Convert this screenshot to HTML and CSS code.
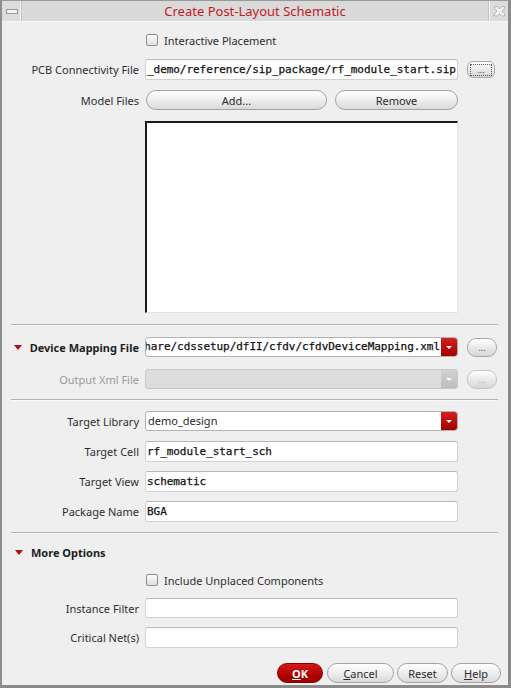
FILE: index.html
```html
<!DOCTYPE html>
<html>
<head>
<meta charset="utf-8">
<link rel="stylesheet" href="styles.css">
</head>
<body>
<div class="win">
  <div class="titlebar">
    <div class="tb-btn tb-min"><svg width="12" height="5" viewBox="0 0 12 5"><rect x="0.5" y="0.5" width="11" height="4" fill="#f4f4f4" stroke="#9a9a9a"/></svg></div>
    <div class="tb-title">Create Post-Layout Schematic</div>
    <div class="tb-btn tb-close"><svg width="13" height="13" viewBox="0 0 13 13"><path d="M1.5 1.5h3l2 2.5 2-2.5h3v2l-2.5 2.5 2.5 2.5v2.5h-3l-2-2.5-2 2.5h-3v-2.5l2.5-2.5-2.5-2.5z" fill="#f2f2f2" stroke="#b4b4b4"/></svg></div>
  </div>
  <div class="content">
    <div class="row r-cb1">
      <span class="lab"></span>
      <label class="check"><span class="box"></span>Interactive Placement</label>
    </div>
    <div class="row r-pcb">
      <span class="lab">PCB Connectivity File</span>
      <div class="field input mono">_demo/reference/sip_package/rf_module_start.sip</div>
      <div class="dots focus"><span>...</span></div>
    </div>
    <div class="row r-model">
      <span class="lab">Model Files</span>
      <div class="twobtn">
        <div class="btn add">Add...</div>
        <div class="btn remove">Remove</div>
      </div>
    </div>
    <div class="row r-list">
      <span class="lab"></span>
      <div class="listbox"></div>
    </div>
    <div class="sep s1"></div>
    <div class="row r-dmf">
      <span class="lab bold"><span class="tri"></span>Device Mapping File</span>
      <div class="field combo">
        <div class="ctext mono clipstart"><span>share/cdssetup/dfII/cfdv/cfdvDeviceMapping.xml</span></div>
        <div class="drop"><span class="arrow"></span></div>
      </div>
      <div class="dots"><span>...</span></div>
    </div>
    <div class="row r-out">
      <span class="lab dis">Output Xml File</span>
      <div class="field combo disabled">
        <div class="ctext"></div>
        <div class="drop"><span class="arrow"></span></div>
      </div>
      <div class="dots disabled"><span>...</span></div>
    </div>
    <div class="sep s2"></div>
    <div class="row r-tl">
      <span class="lab">Target Library</span>
      <div class="field combo">
        <div class="ctext sans">demo_design</div>
        <div class="drop"><span class="arrow"></span></div>
      </div>
    </div>
    <div class="row r-tc">
      <span class="lab">Target Cell</span>
      <div class="field input mono">rf_module_start_sch</div>
    </div>
    <div class="row r-tv">
      <span class="lab">Target View</span>
      <div class="field input mono">schematic</div>
    </div>
    <div class="row r-pn">
      <span class="lab">Package Name</span>
      <div class="field input mono">BGA</div>
    </div>
    <div class="sep s3"></div>
    <div class="row r-more">
      <span class="lab bold left"><span class="tri"></span>More Options</span>
    </div>
    <div class="row r-cb2">
      <span class="lab"></span>
      <label class="check"><span class="box"></span>Include Unplaced Components</label>
    </div>
    <div class="row r-if">
      <span class="lab">Instance Filter</span>
      <div class="field input mono"></div>
    </div>
    <div class="row r-cn">
      <span class="lab">Critical Net(s)</span>
      <div class="field input mono"></div>
    </div>
    <div class="actions">
      <div class="btn ok"><u>O</u>K</div>
      <div class="btn cancel"><u>C</u>ancel</div>
      <div class="btn reset">Reset</div>
      <div class="btn help"><u>H</u>elp</div>
    </div>
  </div>
</div>
</body>
</html>
```
FILE: styles.css
```css
html, body {
  margin: 0;
  padding: 0;
  background: #efefef;
}
body {
  font-family: "Noto Sans", "DejaVu Sans", sans-serif;
  font-size: 11px;
  color: #2a2a2a;
}
.win {
  width: 511px;
  height: 688px;
  box-sizing: border-box;
  border-left: 2px solid #8e8e8e;
  border-right: 3px solid #8a8a8a;
  border-bottom: 3px solid #8a8a8a;
  border-top: 1px solid #9a9a9a;
  background: #efefef;
  display: flex;
  flex-direction: column;
  overflow: hidden;
}
.titlebar {
  height: 21px;
  display: flex;
  align-items: stretch;
  background: #d9d9d9;
  border-bottom: 1px solid #f6f6f6;
  box-sizing: border-box;
}
.tb-btn {
  display: flex;
  align-items: center;
  justify-content: center;
  background: #dcdcdc;
}
.tb-min {
  width: 17px;
  margin-left: 1px;
  border-right: 1px solid #f4f4f4;
}
.tb-close {
  width: 18px;
  border-left: 1px solid #f4f4f4;
  margin-right: 0;
}
.tb-title {
  flex: 1;
  text-align: center;
  color: #c41a1e;
  font-size: 13px;
  line-height: 20px;
  background: #dadada;
  border-left: 1px solid #c4c4c4;
  border-right: 1px solid #c4c4c4;
}
.content {
  flex: 1;
  display: flex;
  flex-direction: column;
}
.row {
  display: flex;
  align-items: center;
}
.lab {
  width: 137px;
  flex: none;
  text-align: right;
  white-space: nowrap;
  color: #2e2e2e;
}
.lab.bold {
  font-weight: bold;
  color: #1e1e1e;
  display: flex;
  align-items: center;
  justify-content: flex-end;
}
.lab.bold.left {
  justify-content: flex-start;
  padding-left: 13px;
  box-sizing: border-box;
}
.lab.dis {
  color: #9a9a9a;
}
.tri {
  width: 0;
  height: 0;
  border-left: 4px solid transparent;
  border-right: 4px solid transparent;
  border-top: 5px solid #b30f12;
  margin-right: 8px;
}
.field {
  margin-left: 6px;
  width: 313px;
  flex: none;
  box-sizing: border-box;
}
.input {
  height: 21px;
  background: #ffffff;
  border: 1px solid #d2d2d2;
  border-top-color: #b8b8b8;
  border-radius: 3px;
  padding: 0 1px;
  line-height: 19px;
  white-space: nowrap;
  overflow: hidden;
}
.mono {
  font-family: "DejaVu Sans Mono", "Liberation Mono", monospace;
  font-size: 11px;
  letter-spacing: -0.05px;
  color: #111111;
  -webkit-text-stroke: 0.25px #111111;
}
.sans {
  font-family: "Noto Sans", "DejaVu Sans", sans-serif;
}
.check {
  margin-left: 7px;
  display: flex;
  align-items: center;
  color: #2e2e2e;
}
.box {
  width: 10px;
  height: 10px;
  border: 1px solid #8d8d8d;
  border-radius: 2px;
  background: linear-gradient(#fdfdfd, #dedede);
  margin-right: 6px;
}
.dots {
  margin-left: 9px;
  width: 30px;
  height: 19px;
  box-sizing: border-box;
  border: 1px solid #a9a9a9;
  border-radius: 9px;
  background: linear-gradient(#ffffff, #e6e6e6 60%, #d6d6d6);
  display: flex;
  align-items: flex-end;
  justify-content: center;
  font-size: 9px;
  line-height: 13px;
  color: #444;
  padding-bottom: 2px;
}
.dots.focus {
  width: 28px;
  height: 17px;
  border-radius: 6px;
}
.dots.focus span {
  outline: 1px dotted #555;
  padding: 0 6px;
  line-height: 10px;
}
.dots.disabled {
  color: #aaa;
  border-color: #c6c6c6;
}
.btn {
  box-sizing: border-box;
  height: 20px;
  border: 1px solid #a3a3a3;
  border-radius: 10px;
  background: linear-gradient(#ffffff, #eeeeee 50%, #dadada);
  display: flex;
  align-items: center;
  justify-content: center;
  color: #2a2a2a;
  font-size: 11px;
}
.twobtn {
  margin-left: 7px;
  display: flex;
  width: 312px;
}
.add {
  width: 181px;
}
.remove {
  width: 123px;
  margin-left: 8px;
}
.listbox {
  margin-left: 6px;
  width: 313px;
  height: 192px;
  box-sizing: border-box;
  background: #ffffff;
  border-top: 2px solid #1c1c1c;
  border-left: 2px solid #1c1c1c;
  border-right: 1px solid #e6e6e6;
  border-bottom: 1px solid #e2e2e2;
}
.sep {
  margin-left: 9px;
  width: 487px;
  height: 1px;
  background: #b2b2b2;
  border-bottom: 1px solid #fafafa;
}
.combo {
  height: 20px;
  display: flex;
  border: 1px solid #b3b3b3;
  border-radius: 3px;
  background: #ffffff;
  overflow: hidden;
}
.ctext {
  flex: 1;
  min-width: 0;
  padding: 0 2px;
  line-height: 18px;
  white-space: nowrap;
  overflow: hidden;
}
.clipstart {
  display: flex;
  justify-content: flex-end;
  padding-right: 1px;
}
.clipstart span {
  flex: none;
}
.drop {
  width: 16px;
  flex: none;
  background: linear-gradient(#d42020, #a10000);
  display: flex;
  align-items: center;
  justify-content: center;
  border-radius: 0 2px 2px 0;
}
.arrow {
  width: 0;
  height: 0;
  border-left: 3px solid transparent;
  border-right: 3px solid transparent;
  border-top: 3px solid #ffffff;
}
.combo.disabled {
  background: #dcdcdc;
  border-color: #c8c8c8;
}
.combo.disabled .drop {
  background: linear-gradient(#d2d2d2, #bdbdbd);
}
.r-cb1 { height: 20px; margin-top: 8px; }
.r-pcb { margin-top: 9px; }
.r-model { margin-top: 10px; }
.r-list { margin-top: 11px; }
.s1 { margin-top: 11px; }
.r-dmf { margin-top: 11px; }
.r-out { margin-top: 12px; }
.s2 { margin-top: 10px; }
.r-tl { margin-top: 10px; }
.r-tc { margin-top: 10px; }
.r-tv { margin-top: 9px; }
.r-pn { margin-top: 9px; }
.s3 { margin-top: 10px; }
.r-more { height: 20px; margin-top: 8px; }
.r-cb2 { height: 20px; margin-top: 8px; }
.r-if { margin-top: 8px; }
.r-if .input { height: 20px; }
.r-cn { margin-top: 9px; }
.actions {
  margin-top: 15px;
  display: flex;
  justify-content: flex-end;
  padding-right: 7px;
}
.actions u {
  text-decoration: underline;
}
.ok {
  width: 46px;
  background: linear-gradient(#d41a1a, #b10000 60%, #9a0000);
  border-color: #8a0000;
  color: #ffffff;
  font-weight: bold;
}
.cancel {
  width: 67px;
  margin-left: 4px;
}
.reset {
  width: 51px;
  margin-left: 3px;
}
.help {
  width: 50px;
  margin-left: 3px;
}
```
